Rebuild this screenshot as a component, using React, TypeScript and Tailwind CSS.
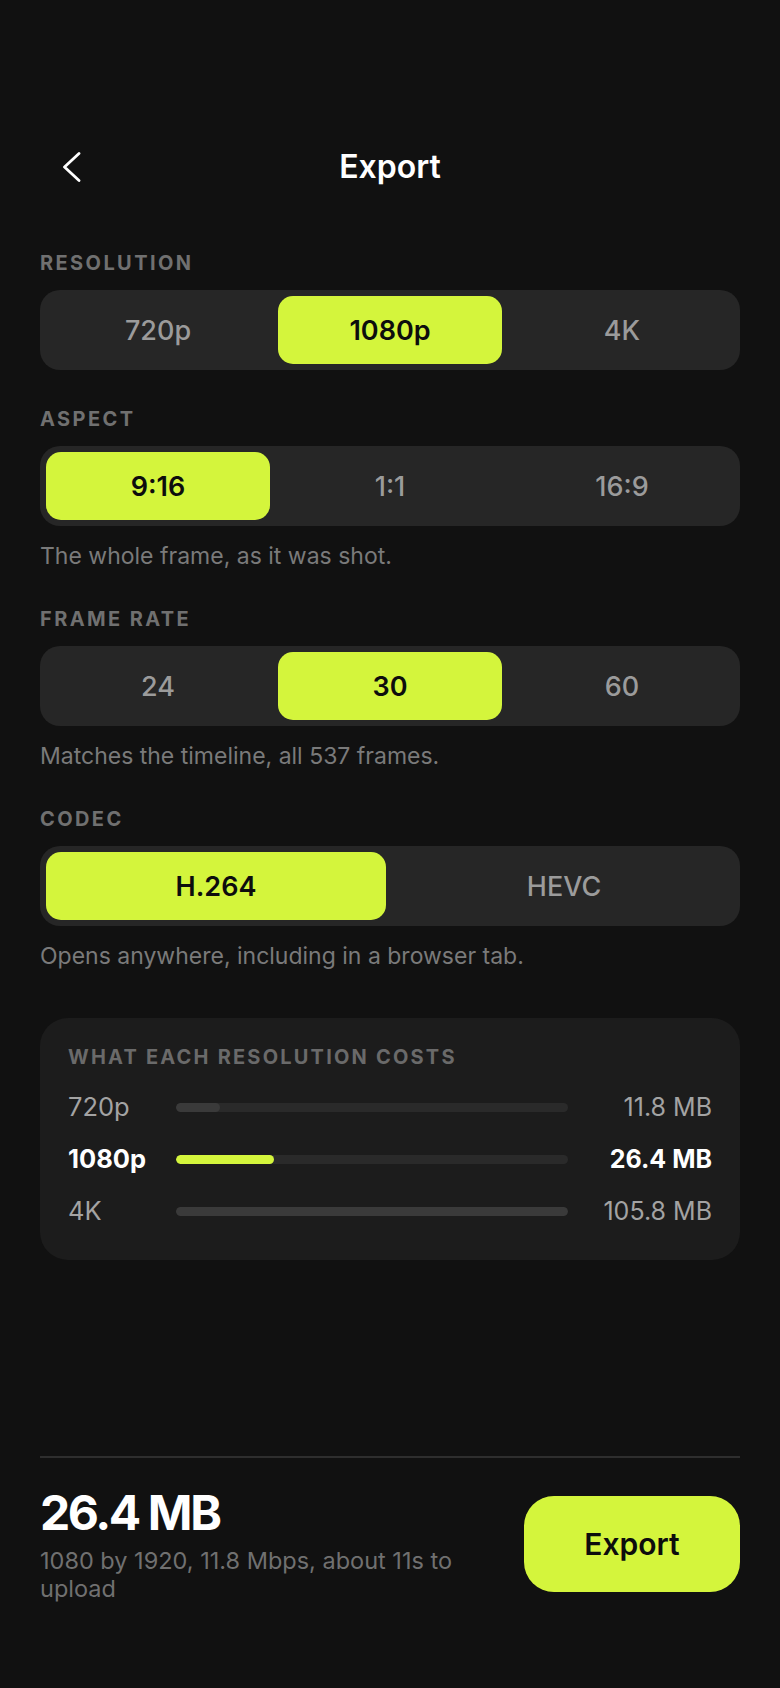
import React, { useState } from "react";

type SegProps = {
  options: string[];
  value: string;
  onChange: (v: string) => void;
  cols: 2 | 3;
};

function Segmented({ options, value, onChange, cols }: SegProps) {
  return (
    <div
      className={
        "grid gap-[8px] rounded-[20px] bg-[#262626] p-[6px] " +
        (cols === 3 ? "grid-cols-3" : "grid-cols-2")
      }
    >
      {options.map((o) => {
        const active = o === value;
        return (
          <button
            key={o}
            onClick={() => onChange(o)}
            className={
              "flex h-[68px] items-center justify-center rounded-[15px] text-[27px] leading-none " +
              (active
                ? "bg-[#d4f53c] font-semibold text-[#0d0d0d]"
                : "font-medium text-[#9b9b9b]")
            }
          >
            {o}
          </button>
        );
      })}
    </div>
  );
}

function Label({ children }: { children: React.ReactNode }) {
  return (
    <div className="mb-[15px] text-[20px] font-bold uppercase leading-[24px] tracking-[0.12em] text-[#707070]">
      {children}
    </div>
  );
}

function Helper({ children }: { children: React.ReactNode }) {
  return (
    <div className="mt-[16px] text-[23px] leading-[28px] text-[#7a7a7a]">
      {children}
    </div>
  );
}

const costs = [
  { label: "720p", mb: 11.8 },
  { label: "1080p", mb: 26.4 },
  { label: "4K", mb: 105.8 },
];

export default function App() {
  const [res, setRes] = useState("1080p");
  const [aspect, setAspect] = useState("9:16");
  const [fps, setFps] = useState("30");
  const [codec, setCodec] = useState("H.264");
  const max = 105.8;

  return (
    <div className="flex min-h-[1688px] flex-col bg-[#111111] px-[40px] pt-[135px] font-['Inter',sans-serif] text-white">
      {/* Header */}
      <div className="grid h-[64px] grid-cols-[64px_1fr_64px] items-center">
        <button className="flex h-[64px] w-[64px] items-center justify-center">
          <svg width="18" height="30" viewBox="0 0 18 30" fill="none">
            <path
              d="M16 1.5 L1.5 15 L16 28.5"
              stroke="white"
              strokeWidth="2.8"
              strokeLinecap="round"
              strokeLinejoin="round"
            />
          </svg>
        </button>
        <div className="text-center text-[32px] font-semibold leading-none">
          Export
        </div>
        <div />
      </div>

      {/* Sections */}
      <div className="mt-[52px] flex flex-col gap-[37px]">
        <section className="flex flex-col">
          <Label>Resolution</Label>
          <Segmented
            cols={3}
            options={["720p", "1080p", "4K"]}
            value={res}
            onChange={setRes}
          />
        </section>
        <section className="flex flex-col">
          <Label>Aspect</Label>
          <Segmented
            cols={3}
            options={["9:16", "1:1", "16:9"]}
            value={aspect}
            onChange={setAspect}
          />
          <Helper>The whole frame, as it was shot.</Helper>
        </section>
        <section className="flex flex-col">
          <Label>Frame rate</Label>
          <Segmented
            cols={3}
            options={["24", "30", "60"]}
            value={fps}
            onChange={setFps}
          />
          <Helper>Matches the timeline, all 537 frames.</Helper>
        </section>
        <section className="flex flex-col">
          <Label>Codec</Label>
          <Segmented
            cols={2}
            options={["H.264", "HEVC"]}
            value={codec}
            onChange={setCodec}
          />
          <Helper>Opens anywhere, including in a browser tab.</Helper>
        </section>
      </div>

      {/* Cost card */}
      <div className="mt-[48px] rounded-[28px] bg-[#1c1c1c] px-[28px] pb-[31px] pt-[27px]">
        <div className="text-[20px] font-bold uppercase leading-[24px] tracking-[0.11em] text-[#6a6a6a]">
          What each resolution costs
        </div>
        <div className="mt-[20px] flex flex-col gap-[16px]">
          {costs.map((c) => {
            const active = c.label === "1080p";
            return (
              <div key={c.label} className="flex h-[36px] items-center gap-[24px]">
                <div
                  className={
                    "w-[84px] text-[25.5px] leading-none " +
                    (active ? "font-bold text-white" : "text-[#a3a3a3]")
                  }
                >
                  {c.label}
                </div>
                <div className="h-[9px] flex-1 overflow-hidden rounded-full bg-[#2a2a2a]">
                  <div
                    className={
                      "h-full rounded-full " +
                      (active ? "bg-[#d4f53c]" : "bg-[#3a3a3a]")
                    }
                    style={{ width: `${(c.mb / max) * 100}%` }}
                  />
                </div>
                <div
                  className={
                    "w-[120px] text-right text-[25px] leading-none " +
                    (active ? "font-bold text-white" : "text-[#a3a3a3]")
                  }
                >
                  {c.mb.toFixed(1)} MB
                </div>
              </div>
            );
          })}
        </div>
      </div>

      {/* Footer */}
      <div className="mt-auto border-t-2 border-[#2e2e2e] pb-[85px] pt-[31px]">
        <div className="flex items-start gap-[32px]">
          <div className="min-w-0 flex-1">
            <div className="text-[48px] font-bold leading-[48px] tracking-[-0.05em]">
              26.4 MB
            </div>
            <div className="mt-[10px] text-[23.5px] leading-[28px] text-[#707070]">
              1080 by 1920, 11.8 Mbps, about 11s to upload
            </div>
          </div>
          <button className="mt-[7px] flex h-[96px] w-[216px] shrink-0 items-center justify-center rounded-[30px] bg-[#d4f53c] text-[30px] font-semibold text-[#0d0d0d]">
            Export
          </button>
        </div>
      </div>
    </div>
  );
}
